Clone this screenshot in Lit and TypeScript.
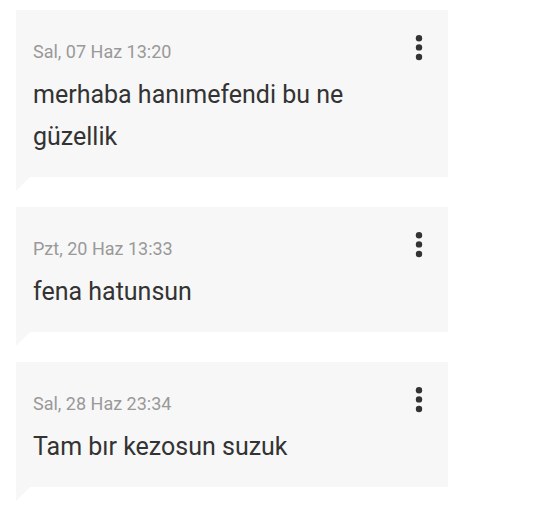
import { LitElement, html, css } from "lit";
import { customElement, property } from "lit/decorators.js";

interface Message {
  date: string;
  text: string;
}

@customElement("message-bubble")
class MessageBubble extends LitElement {
  @property() date = "";
  @property() text = "";

  static styles = css`
    :host {
      display: block;
    }
    .bubble {
      display: grid;
      grid-template-columns: 1fr auto;
      background: #f7f7f7;
      padding: 20px 17px 19px;
    }
    .date {
      color: #999;
      font-size: 18px;
      line-height: 44px;
    }
    .text {
      grid-column: 1 / -1;
      max-width: 336px;
      margin: 0;
      color: #333;
      font-size: 25px;
      line-height: 42px;
    }
    .menu {
      width: 24px;
      height: 36px;
      padding: 0;
      border: 0;
      background: none;
      color: #333;
      cursor: pointer;
    }
    .menu svg {
      display: block;
      width: 24px;
      height: 36px;
    }
    .tail {
      display: block;
      width: 14px;
      height: 14px;
      background: #f7f7f7;
      clip-path: polygon(0 0, 100% 0, 0 100%);
    }
  `;

  render() {
    return html`
      <article class="bubble">
        <time class="date">${this.date}</time>
        <button class="menu" type="button" aria-label="Mesaj seçenekleri">
          <svg viewBox="0 0 24 36" fill="currentColor" aria-hidden="true">
            <circle cx="12" cy="8.2" r="3.2" />
            <circle cx="12" cy="17.4" r="3.2" />
            <circle cx="12" cy="27" r="3.2" />
          </svg>
        </button>
        <p class="text">${this.text}</p>
      </article>
      <span class="tail"></span>
    `;
  }
}

@customElement("app-root")
class AppRoot extends LitElement {
  private messages: Message[] = [
    { date: "Sal, 07 Haz 13:20", text: "merhaba hanımefendi bu ne güzellik" },
    { date: "Pzt, 20 Haz 13:33", text: "fena hatunsun" },
    { date: "Sal, 28 Haz 23:34", text: "Tam bır kezosun suzuk" },
  ];

  static styles = css`
    :host {
      display: block;
      background: #fff;
      font-family: Roboto, sans-serif;
    }
    .thread {
      display: flex;
      flex-direction: column;
      gap: 16px;
      width: 80%;
      padding: 10px 16px 0;
    }
  `;

  render() {
    return html`
      <main class="thread">
        ${this.messages.map(
          (m) => html`<message-bubble .date=${m.date} .text=${m.text}></message-bubble>`
        )}
      </main>
    `;
  }
}
